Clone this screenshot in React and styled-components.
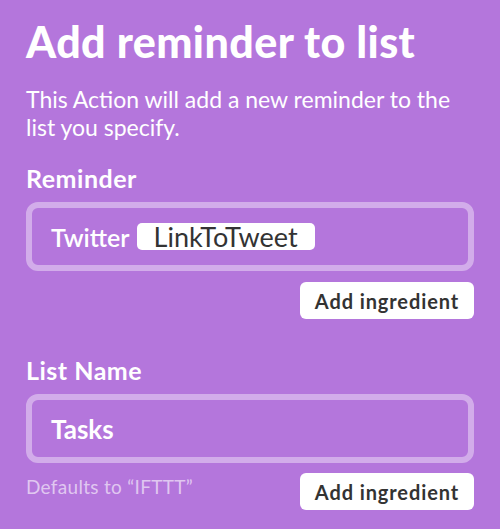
import React from "react";
import styled, { createGlobalStyle } from "styled-components";

const GlobalStyle = createGlobalStyle`
  html, body {
    margin: 0;
    padding: 0;
    background: #b476dc;
  }
  body {
    font-family: "Lato", "Liberation Sans", sans-serif;
    color: #fff;
  }
`;

const Page = styled.div`
  width: 500px;
  height: 529px;
  overflow: hidden;
  box-sizing: border-box;
  padding: 13px 26px 0;
  background: #b476dc;
`;

const Title = styled.h1`
  margin: 0;
  font-size: 43px;
  font-weight: 900;
  line-height: 58px;
  letter-spacing: 0.4px;
`;

const Description = styled.p`
  margin: 14px 0 0;
  font-size: 23px;
  line-height: 28px;
  font-weight: 400;
`;

const Field = styled.div`
  display: flex;
  flex-direction: column;
  margin-top: ${(p) => p.$gap}px;
`;

const Label = styled.label`
  font-size: 25px;
  font-weight: 700;
  line-height: 30px;
  letter-spacing: 0.5px;
`;

const InputBox = styled.div`
  margin-top: 9px;
  height: 69px;
  box-sizing: border-box;
  border: 6px solid rgba(255, 255, 255, 0.4);
  border-radius: 12px;
  display: flex;
  align-items: center;
  padding: 0 19px;
  gap: 7px;
  font-size: 25px;
`;

const PlainText = styled.span`
  font-weight: ${(p) => (p.$bold ? 700 : 600)};
  font-size: ${(p) => (p.$bold ? 26 : 25)}px;
`;

const Pill = styled.span`
  background: #fff;
  color: #333;
  border-radius: 5px;
  padding: 0 17px;
  height: 27px;
  display: inline-flex;
  align-items: center;
  font-size: 27px;
  font-weight: 400;
`;

const Footer = styled.div`
  display: flex;
  justify-content: space-between;
  align-items: flex-start;
  margin-top: ${(p) => p.$gap}px;
`;

const Hint = styled.span`
  color: rgba(255, 255, 255, 0.6);
  font-size: 19px;
  line-height: 26px;
  letter-spacing: 0.3px;
  margin-top: 1px;
`;

const IngredientButton = styled.button`
  margin-left: auto;
  width: 174px;
  height: 37px;
  border: none;
  border-radius: 6px;
  background: #fff;
  color: #333;
  font-family: "Lato", "Liberation Sans", sans-serif;
  font-size: 20px;
  font-weight: 700;
  letter-spacing: 0.9px;
  padding: 0;
  cursor: pointer;
`;

export default function App() {
  return (
    <Page>
      <GlobalStyle />
      <Title>Add reminder to list</Title>
      <Description>
        This Action will add a new reminder to the list you specify.
      </Description>

      <Field $gap={22}>
        <Label>Reminder</Label>
        <InputBox>
          <PlainText>Twitter</PlainText>
          <Pill>LinkToTweet</Pill>
        </InputBox>
        <Footer $gap={11}>
          <IngredientButton>Add ingredient</IngredientButton>
        </Footer>
      </Field>

      <Field $gap={36}>
        <Label>List Name</Label>
        <InputBox>
          <PlainText $bold>Tasks</PlainText>
        </InputBox>
        <Footer $gap={10}>
          <Hint>Defaults to “IFTTT”</Hint>
          <IngredientButton>Add ingredient</IngredientButton>
        </Footer>
      </Field>
    </Page>
  );
}
